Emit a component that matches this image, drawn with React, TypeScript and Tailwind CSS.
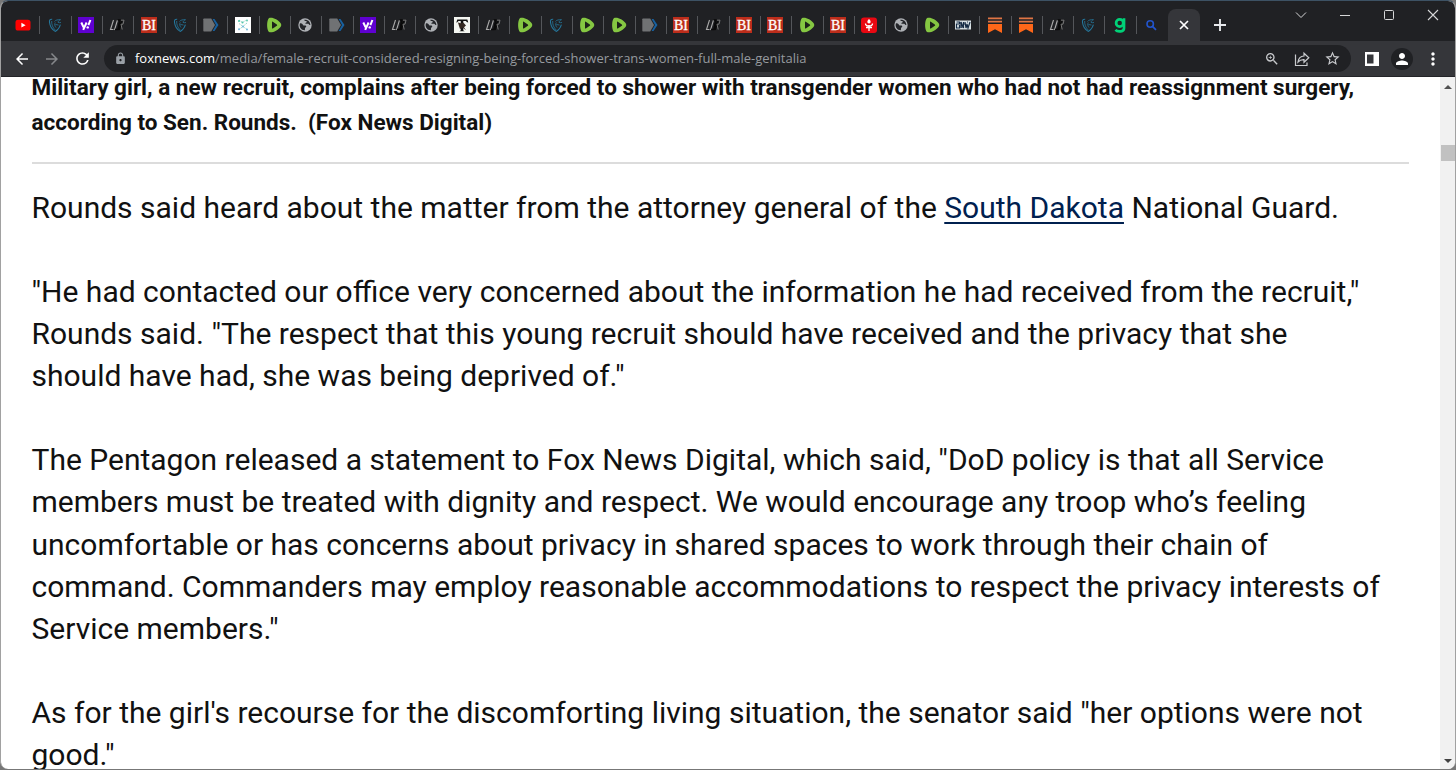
import React from 'react';
import { MdArrowBack, MdArrowForward, MdLock, MdMoreVert, MdPerson, MdRefresh, MdStarOutline, MdZoomIn } from 'react-icons/md';

type Site = 'youtube' | 'trident' | 'yahoo' | 'lr' | 'bi' | 'arrow' | 'dots' | 'rumble' | 'globe' | 'tshirt' | 'torch' | 'noise' | 'substack' | 'gab' | 'search';

const tabs: Site[] = [
  'youtube', 'trident', 'yahoo', 'lr', 'bi', 'trident', 'arrow', 'dots', 'rumble', 'globe',
  'arrow', 'yahoo', 'lr', 'globe', 'tshirt', 'lr', 'rumble', 'trident', 'rumble', 'rumble',
  'arrow', 'bi', 'lr', 'bi', 'bi', 'rumble', 'bi', 'torch', 'globe', 'rumble',
  'noise', 'substack', 'substack', 'lr', 'trident', 'gab', 'search',
];

const paragraphs: React.ReactNode[][] = [
  [
    <>Rounds said heard about the matter from the attorney general of the <a href="#" className="text-[#00204f] underline decoration-2 underline-offset-4">South Dakota</a> National Guard.</>,
  ],
  [
    '"He had contacted our office very concerned about the information he had received from the recruit,"',
    'Rounds said. "The respect that this young recruit should have received and the privacy that she',
    'should have had, she was being deprived of."',
  ],
  [
    'The Pentagon released a statement to Fox News Digital, which said, "DoD policy is that all Service',
    'members must be treated with dignity and respect. We would encourage any troop who’s feeling',
    'uncomfortable or has concerns about privacy in shared spaces to work through their chain of',
    'command. Commanders may employ reasonable accommodations to respect the privacy interests of',
    'Service members."',
  ],
  [
    'As for the girl\'s recourse for the discomforting living situation, the senator said "her options were not',
    'good."',
  ],
];

const Favicon: React.FC<{ site: Site }> = ({ site }) => {
  switch (site) {
    case 'youtube':
      return (
        <svg className="size-4" viewBox="0 0 16 16">
          <rect x="0.5" y="2.8" width="15" height="10.8" rx="2.6" fill="#f00" />
          <path d="M6.4 5.8v4.8l4.2-2.4z" fill="#fff" />
        </svg>
      );
    case 'trident':
      return (
        <svg className="size-4" viewBox="0 0 16 16" fill="none" stroke="#25769b">
          <path d="M5.2 2.2C3 2 2.2 3 2.5 5.2c.4 4 2.8 7.400 5.700 9.200 2.500-1.200 4.200-3.500 5.200-6.700" strokeWidth="1.1" />
          <path d="M4.700 4c-.3 3.500 1 6.500 3.500 9M7.500 4.500c1-1.500 3.500-2 6-1.800-1.500.6-2.300 1.500-2.500 2.600 1 .4 1.900.5 3 .2M8.500 7.500l3 .5M8.300 5.500c-1 1.500-.6 3.500.7 5" strokeWidth=".8" />
        </svg>
      );
    case 'yahoo':
      return (
        <svg className="size-4" viewBox="0 0 16 16">
          <rect width="16" height="16" fill="#5f01d1" />
          <path d="M3.300 5.500l2.300 4.700M8.600 5.500l-3.400 7.300M12.400 3l-2 5.200" stroke="#fff" strokeWidth="2" fill="none" />
          <circle cx="9.700" cy="10.400" r="1.200" fill="#fff" />
        </svg>
      );
    case 'lr':
      return (
        <svg className="size-4" viewBox="0 0 16 16" fill="none">
          <path d="M4.500 3L1.500 12.500H4.500M8.500 3L5.500 13" stroke="#aaa" strokeWidth="1.100" />
          <path d="M8.500 3h2.300L9 12.500H6M13 3l-3 10" stroke="#090909" strokeWidth="1.600" />
          <path d="M12 3.200h3l-1 4h-2l1.200 5.300" stroke="#777" strokeWidth="1" />
        </svg>
      );
    case 'bi':
      return (
        <svg className="size-4" viewBox="0 0 16 16">
          <rect width="16" height="16" fill="#bd2d1b" />
          <text x="8" y="13.300" textAnchor="middle" textLength="14" lengthAdjust="spacingAndGlyphs" fontFamily="Liberation Serif, serif" fontSize="15.500" fill="#fff" stroke="#fff" strokeWidth=".35">BI</text>
        </svg>
      );
    case 'arrow':
      return (
        <svg className="size-4" viewBox="0 0 16 16">
          <path d="M1 1.500h7.200L12 8l-3.800 6.500H1q-.7 0-.7-.8V2.200q0-.7.700-.7z" fill="#707274" />
          <path d="M9.600 2h1.900L15.500 8l-4 6H9.600L13 8z" fill="#17609f" />
        </svg>
      );
    case 'dots':
      return (
        <svg className="size-4" viewBox="0 0 16 16">
          <rect width="16" height="16" fill="#fff" />
          <path d="M4 3l3.500 2.500L11.500 3M4 6.500l4 3 4-3.500M4 12.500l4-3 4 3" stroke="#7fcdbb" strokeWidth=".8" fill="none" strokeDasharray="1.500 .7" />
          <g fill="#53c6aa"><circle cx="4" cy="4" r="1.100" /><circle cx="7.500" cy="5.500" r="1" /><circle cx="12" cy="3.500" r=".9" /></g>
          <g fill="#72b7df"><circle cx="4" cy="12.300" r="1" /><circle cx="8" cy="9.500" r="1" /><circle cx="12" cy="12.500" r="1" /></g>
        </svg>
      );
    case 'rumble':
      return (
        <svg className="size-4" viewBox="0 0 16 16">
          <path d="M3.800.8C7.300.2 12 2.800 14.500 6c1 1.300 1 2.700 0 4-2.500 3.200-7 5.700-10.700 5.300C.3 14.800.3 1.400 3.800.8z" fill="#85c742" />
          <path d="M6 5.100v5.800c0 .5.400.7.800.5l4-2.600q.9-.7 0-1.400l-4-2.700q-.8-.4-.8.400z" fill="#1c2219" />
        </svg>
      );
    case 'globe':
      return (
        <svg className="size-4" viewBox="0 0 16 16">
          <circle cx="8" cy="8" r="6.700" fill="#aeb1b5" />
          <path d="M3 6.300c1-.2 2 .1 2.600.9.500.6.500 1.200 1.300 1.300h1.600c.7 0 1 .9.500 1.500L8 11l-.1 2.300C4.300 13.400 1.600 9.700 3 6.300zM7.200 2.700c.2 1 .8 1.300 1.800 1.200.900 0 1 .8.600 1.300-.4.600-1.300.3-1.300 1 0 .6.800.600 1.500.6h1.400c.600 0 .8 1 1.400 1.300h.8C13.300 4.500 10.700 2.200 7.200 2.700z" fill="#24262a" />
        </svg>
      );
    case 'tshirt':
      return (
        <svg className="size-4" viewBox="0 0 16 16">
          <rect width="16" height="16" fill="#f4f6f1" />
          <path d="M2.300 5.500l1-3h10l1 3-1-.2-1.600-1.300H9.300v9.500l1.500.7H5.200l1.500-.7V4H4.500L3 5.500z" fill="#111" />
          <path d="M4 5.500l3 .8 2.500-.5 2.500 2.700-2 1.800 2 3-3.300-2.500L6 12l-1-3z" fill="#332720" />
        </svg>
      );
    case 'torch':
      return (
        <svg className="size-4" viewBox="0 0 16 16">
          <rect y=".5" width="16" height="15.500" rx="3" fill="#e90812" />
          <path d="M8 2c2.300 2 2.100 4.400 0 4.500-2.100-.1-2.300-2.500 0-4.500z" fill="#fff" />
          <path d="M4.500 6.500c0 1.500 1.500 2.500 3.500 2.500s3.500-1 3.500-2.500M5 10.500h6M8 8v6" stroke="#fff" strokeWidth="1.300" fill="none" />
        </svg>
      );
    case 'noise':
      return (
        <svg className="size-4" viewBox="0 0 16 16">
          <rect y="3.500" width="16" height="9" fill="#d9e1e4" />
          <path d="M1.500 5h3v2h-3v4h3V8M6 11V5l2.500 6V5M10 5l1 6 1-4 1 4 2-6M5 6h1M8 7h2M6 10h3M12 5h1" stroke="#172c46" strokeWidth="1.200" fill="none" />
        </svg>
      );
    case 'substack':
      return (
        <svg className="size-4" viewBox="0 0 16 16" fill="#ff6719">
          <path d="M1 .5h14v1.700H1zM1 3.800h14v1.600H1z" fill="#df7544" />
          <path d="M1 7h14v9l-7-3.800L1 16z" />
        </svg>
      );
    case 'gab':
      return (
        <svg className="size-4" viewBox="0 0 16 16" fill="none" stroke="#00d178" strokeWidth="2.700">
          <circle cx="7.700" cy="6" r="3.600" />
          <path d="M12 1.200v10c0 3.500-6 4.200-8.600 1.700" />
        </svg>
      );
    default:
      return (
        <svg className="size-4" viewBox="0 0 16 16" fill="none" stroke="#2254cd" strokeWidth="1.600">
          <circle cx="7.200" cy="7" r="3.200" />
          <path d="M9.500 9.300l3.500 3.500" strokeWidth="1.800" />
        </svg>
      );
  }
};

const TabStrip = () => (
  <div className="flex h-10 shrink-0 bg-[#202124] pl-2">
    {tabs.map((site, i) => (
      <div key={i} className="flex h-full w-[31.33px] shrink-0 items-center justify-end pt-2">
        <Favicon site={site} />
        <span className={`ml-2 h-[18px] w-px ${i < tabs.length - 1 ? 'bg-[#54565a]' : ''}`} />
      </div>
    ))}
    <div className="mt-2 flex h-8 w-8 shrink-0 items-center justify-center rounded-t-lg bg-[#35363a] text-white">
      <svg className="size-3" viewBox="0 0 12 12" stroke="currentColor" strokeWidth="1.700"><path d="M2 2l8 8M10 2l-8 8" /></svg>
    </div>
    <div className="flex w-10 items-center justify-center pt-2 text-[#e8eaed]">
      <svg className="size-3" viewBox="0 0 12 12" stroke="currentColor" strokeWidth="1.900"><path d="M6 0v12M0 6h12" /></svg>
    </div>
    <div className="ml-auto flex h-7 items-center gap-8 pr-4 text-[#d6d7d8]">
      <svg className="size-3" viewBox="0 0 12 12" fill="none" stroke="currentColor"><path d="M1 3.500l5 5 5-5" /></svg>
      <svg className="size-3" viewBox="0 0 12 12" stroke="currentColor"><path d="M1 6.500h10" /></svg>
      <svg className="size-3" viewBox="0 0 12 12" fill="none" stroke="currentColor"><rect x="1.500" y="1.500" width="9" height="9" rx="1" /></svg>
      <svg className="size-3" viewBox="0 0 12 12" stroke="currentColor" strokeWidth="1.100"><path d="M1 1l10 10M11 1L1 11" /></svg>
    </div>
  </div>
);

const Toolbar = () => (
  <div className="flex h-9 shrink-0 items-center border-b border-[#232428] bg-[#35363a] pr-3 pl-3">
    <MdArrowBack className="size-[18px] text-white" />
    <MdArrowForward className="ml-3 size-[18px] text-[#86888b]" />
    <MdRefresh className="ml-3 size-[19px] text-white" />
    <div className="ml-3 flex h-[27px] flex-1 items-center rounded-full bg-[#202124] pr-2.5 pl-2.5">
      <MdLock className="size-[13px] text-[#9aa0a6]" />
      <p className="ml-2 font-['Open_Sans',sans-serif] text-[13px] whitespace-pre text-[#969a9f]">
        <span className="text-white">foxnews.com</span>
        <span>/media/female-recruit-considered-resigning-being-forced-shower-trans-women-full-male-genitalia</span>
      </p>
      <div className="ml-auto flex items-center gap-3.5 text-[#c8cacd]">
        <MdZoomIn className="size-4" />
        <svg className="size-4" viewBox="0 0 16 16" fill="none" stroke="currentColor" strokeWidth="1.200">
          <path d="M1.500 3.500v11h11.500v-3" />
          <path d="M4 11c.5-3.800 2.500-5.800 6-6V2.200l4.800 4.600L10 11.300V8.700c-2.700-.1-4.500.6-6 2.300z" />
        </svg>
        <MdStarOutline className="size-[17px]" />
      </div>
    </div>
    <svg className="ml-3.5 size-[14px]" viewBox="0 0 14 14"><path d="M0 0h14v14H0z" fill="#fff" /><path d="M2 2.500h6.500v9H2z" fill="#35363a" /></svg>
    <div className="ml-3 flex size-[22px] items-center justify-center rounded-full bg-[#202124]">
      <MdPerson className="size-[18px] text-white" />
    </div>
    <MdMoreVert className="ml-2.5 size-5 text-white" />
  </div>
);

const App: React.FC = () => (
  <div className="h-[770px] w-[1456px] overflow-hidden bg-[#777]">
    <div className="flex h-[769px] flex-col overflow-hidden rounded-lg border-x border-t border-x-[#a1a1a1] border-t-[#3d5264] bg-white">
      <TabStrip />
      <Toolbar />
      <div className="flex min-h-0 flex-1">
        <main className="min-w-0 flex-1 overflow-hidden pr-[31px] pl-[30.500px] font-[Roboto,sans-serif] text-[#111]">
          <div className="-mt-[7px] border-b-2 border-[#dcdcdc] pb-[22px] text-[22.5px] leading-[35px] font-bold whitespace-pre">
            <p>Military girl, a new recruit, complains after being forced to shower with transgender women who had not had reassignment surgery,</p>
            <p>according to Sen. Rounds.  (Fox News Digital)</p>
          </div>
          <div className="flex flex-col gap-[42px] pt-[23px] text-[30px] leading-[42.1px] whitespace-nowrap">
            {paragraphs.map((lines, i) => (
              <div key={i}>
                {lines.map((line, n) => (
                  <p key={n}>{line}</p>
                ))}
              </div>
            ))}
          </div>
        </main>
        <div className="flex w-[15px] shrink-0 flex-col items-center bg-[#f1f1f1]">
          <svg className="mt-1.5 h-2 w-2" viewBox="0 0 8 8"><path d="M0 6l4-4 4 4z" fill="#505050" /></svg>
          <div className="mt-[54px] ml-px h-4 w-full bg-[#c1c1c1]" />
          <svg className="mt-auto mb-1 h-2 w-2" viewBox="0 0 8 8"><path d="M0 2h8L4 6z" fill="#404040" /></svg>
        </div>
      </div>
    </div>
  </div>
);

export default App;
